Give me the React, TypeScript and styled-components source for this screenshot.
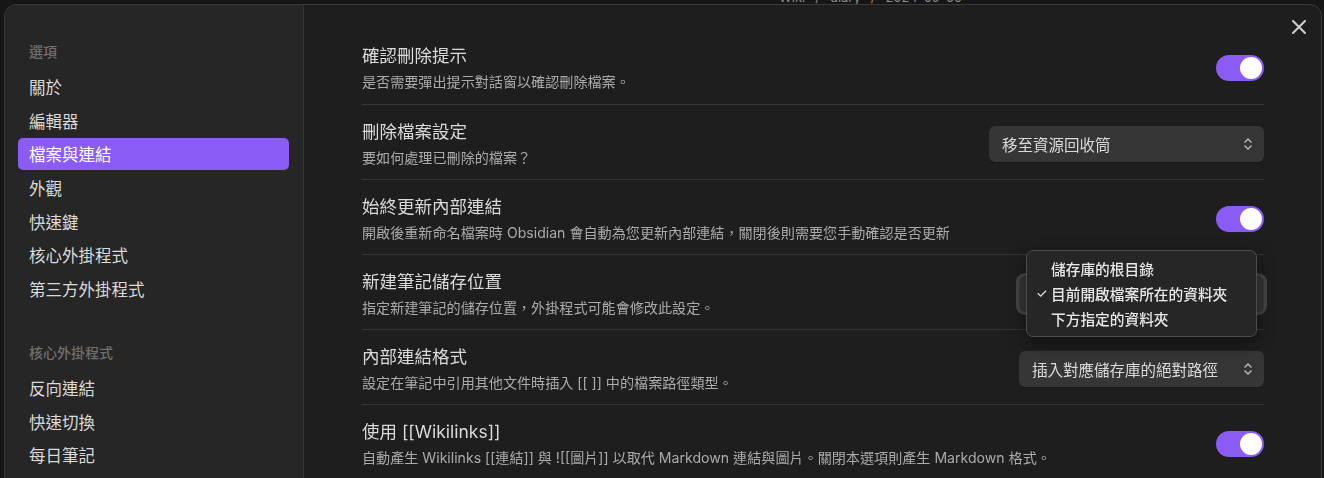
import styled, { createGlobalStyle } from "styled-components";

const GlobalStyle = createGlobalStyle`
  html, body {
    margin: 0;
    padding: 0;
    background: #161616;
    overflow: hidden;
  }
  body {
    font-family: Inter, "Noto Sans CJK TC", sans-serif;
    color: #dadada;
  }
  * {
    box-sizing: border-box;
  }
`;

const Page = styled.div`
  position: relative;
  width: 100%;
  height: 100vh;
`;

// app header behind the settings modal, only its bottom edge shows
const AppHeader = styled.div`
  display: flex;
  justify-content: flex-end;
  padding-right: 362px;
  margin-top: -10px;
  height: 14px;
  font-size: 13px;
  line-height: 14px;
  color: #8a8a8a;
  gap: 10px;
`;

const Modal = styled.div`
  position: fixed;
  top: 4px;
  left: 4px;
  right: 2px;
  bottom: -20px;
  display: flex;
  background: #1e1e1e;
  border: 1px solid #3a3a3a;
  border-radius: 12px;
  overflow: hidden;
`;

const Sidebar = styled.nav`
  display: flex;
  flex-direction: column;
  width: 299px;
  flex: none;
  padding: 37px 14px 0 13px;
  background: #262626;
  border-right: 1px solid #363636;
`;

const SidebarHeader = styled.div<{ $first?: boolean }>`
  padding-left: 11px;
  margin-top: ${(p) => (p.$first ? "0" : "38px")};
  margin-bottom: 9px;
  font-size: 14px;
  line-height: 20px;
  font-weight: 500;
  color: #6f6f6f;
`;

const NavList = styled.div`
  display: flex;
  flex-direction: column;
  gap: 1.67px;
`;

const NavItem = styled.div<{ $active?: boolean }>`
  display: flex;
  align-items: center;
  height: 32px;
  padding-left: 11px;
  border-radius: 5px;
  font-size: 16.5px;
  color: ${(p) => (p.$active ? "#ffffff" : "#dadada")};
  background: ${(p) => (p.$active ? "#8a5cf5" : "transparent")};
  cursor: pointer;
`;

const Content = styled.main`
  position: relative;
  flex: 1;
  padding: 24px 57px 0 58px;
`;

const CloseButton = styled.div`
  position: absolute;
  top: 14px;
  right: 14px;
  width: 16px;
  height: 16px;
  display: flex;
  align-items: center;
  justify-content: center;
  cursor: pointer;
`;

const Rows = styled.div`
  display: flex;
  flex-direction: column;
`;

const Row = styled.div`
  display: flex;
  align-items: center;
  gap: 20px;
  height: 75px;
  padding: 15px 0 12px;
  border-top: 1px solid #363636;
  &:first-child {
    border-top: none;
  }
`;

const Info = styled.div`
  flex: 1;
  min-width: 0;
  display: flex;
  flex-direction: column;
  gap: 4px;
`;

const Name = styled.div`
  height: 24px;
  font-size: 17.5px;
  line-height: 24px;
  color: #dadada;
  white-space: nowrap;
`;

const Desc = styled.div`
  height: 20px;
  font-size: 14.1px;
  line-height: 20px;
  color: #ababab;
  white-space: nowrap;
`;

const Control = styled.div`
  position: relative;
  flex: none;
  display: flex;
  align-items: center;
`;

const Toggle = styled.div<{ $on?: boolean }>`
  display: flex;
  align-items: center;
  justify-content: ${(p) => (p.$on ? "flex-end" : "flex-start")};
  width: 48px;
  height: 26px;
  padding: 0 2px;
  border-radius: 13px;
  background: ${(p) => (p.$on ? "#8a5cf5" : "#3f3f3f")};
  cursor: pointer;
`;

const Knob = styled.div`
  width: 22px;
  height: 22px;
  border-radius: 50%;
  background: #ffffff;
`;

const SelectBox = styled.div<{ $width: number; $focused?: boolean }>`
  display: flex;
  align-items: center;
  justify-content: space-between;
  width: ${(p) => p.$width}px;
  height: 36px;
  padding: 0 10px 0 13px;
  border-radius: 6px;
  background: #363636;
  font-size: 15.5px;
  color: #dadada;
  box-shadow: ${(p) => (p.$focused ? "0 0 0 3px #454545" : "0 1px 1px rgba(0,0,0,0.25)")};
  cursor: pointer;
`;

const Menu = styled.div`
  position: absolute;
  top: -26px;
  right: 7px;
  width: 231px;
  padding: 5px 0;
  background: #262626;
  border: 1px solid #4c4c4c;
  border-radius: 7px;
  box-shadow: 0 6px 18px rgba(0, 0, 0, 0.45);
  z-index: 10;
`;

const MenuItem = styled.div`
  display: flex;
  align-items: center;
  height: 25px;
  padding-left: 9px;
  font-size: 14.7px;
  font-weight: 500;
  color: #e8e8e8;
`;

const Check = styled.span`
  width: 15px;
  font-size: 13px;
  color: #d8d8d8;
`;

function UpDown() {
  return (
    <svg width="12" height="16" viewBox="0 0 12 16" fill="none">
      <path d="M3 6 L6 3 L9 6" stroke="#bdbdbd" strokeWidth="1.4" strokeLinecap="round" strokeLinejoin="round" />
      <path d="M3 10 L6 13 L9 10" stroke="#bdbdbd" strokeWidth="1.4" strokeLinecap="round" strokeLinejoin="round" />
    </svg>
  );
}

function CloseIcon() {
  return (
    <svg width="14" height="14" viewBox="0 0 14 14">
      <path d="M1 1 L13 13 M13 1 L1 13" stroke="#cfcfcf" strokeWidth="2" strokeLinecap="round" />
    </svg>
  );
}

const options = ["關於", "編輯器", "檔案與連結", "外觀", "快速鍵", "核心外掛程式", "第三方外掛程式"];
const corePlugins = ["反向連結", "快速切換", "每日筆記"];

export default function App() {
  return (
    <Page>
      <GlobalStyle />
      <AppHeader>
        <span>Wiki</span>
        <span>/</span>
        <span>diary</span>
        <span>/</span>
        <span>2024-09-05</span>
      </AppHeader>
      <Modal>
        <Sidebar>
          <SidebarHeader $first>選項</SidebarHeader>
          <NavList>
            {options.map((o) => (
              <NavItem key={o} $active={o === "檔案與連結"}>
                {o}
              </NavItem>
            ))}
          </NavList>
          <SidebarHeader>核心外掛程式</SidebarHeader>
          <NavList>
            {corePlugins.map((o) => (
              <NavItem key={o}>{o}</NavItem>
            ))}
          </NavList>
        </Sidebar>
        <Content>
          <CloseButton>
            <CloseIcon />
          </CloseButton>
          <Rows>
            <Row>
              <Info>
                <Name>確認刪除提示</Name>
                <Desc>是否需要彈出提示對話窗以確認刪除檔案。</Desc>
              </Info>
              <Control>
                <Toggle $on>
                  <Knob />
                </Toggle>
              </Control>
            </Row>
            <Row>
              <Info>
                <Name>刪除檔案設定</Name>
                <Desc>要如何處理已刪除的檔案？</Desc>
              </Info>
              <Control>
                <SelectBox $width={275}>
                  <span>移至資源回收筒</span>
                  <UpDown />
                </SelectBox>
              </Control>
            </Row>
            <Row>
              <Info>
                <Name>始終更新內部連結</Name>
                <Desc>開啟後重新命名檔案時 Obsidian 會自動為您更新內部連結，關閉後則需要您手動確認是否更新</Desc>
              </Info>
              <Control>
                <Toggle $on>
                  <Knob />
                </Toggle>
              </Control>
            </Row>
            <Row>
              <Info>
                <Name>新建筆記儲存位置</Name>
                <Desc>指定新建筆記的儲存位置，外掛程式可能會修改此設定。</Desc>
              </Info>
              <Control>
                <SelectBox $width={245} $focused>
                  <span>目前開啟檔案所在的資料夾</span>
                  <UpDown />
                </SelectBox>
                <Menu>
                  <MenuItem>
                    <Check />
                    儲存庫的根目錄
                  </MenuItem>
                  <MenuItem>
                    <Check>✓</Check>
                    目前開啟檔案所在的資料夾
                  </MenuItem>
                  <MenuItem>
                    <Check />
                    下方指定的資料夾
                  </MenuItem>
                </Menu>
              </Control>
            </Row>
            <Row>
              <Info>
                <Name>內部連結格式</Name>
                <Desc>設定在筆記中引用其他文件時插入 [[ ]] 中的檔案路徑類型。</Desc>
              </Info>
              <Control>
                <SelectBox $width={245}>
                  <span>插入對應儲存庫的絕對路徑</span>
                  <UpDown />
                </SelectBox>
              </Control>
            </Row>
            <Row>
              <Info>
                <Name>使用 [[Wikilinks]]</Name>
                <Desc>自動產生 Wikilinks [[連結]] 與 ![[圖片]] 以取代 Markdown 連結與圖片。關閉本選項則產生 Markdown 格式。</Desc>
              </Info>
              <Control>
                <Toggle $on>
                  <Knob />
                </Toggle>
              </Control>
            </Row>
          </Rows>
        </Content>
      </Modal>
    </Page>
  );
}
